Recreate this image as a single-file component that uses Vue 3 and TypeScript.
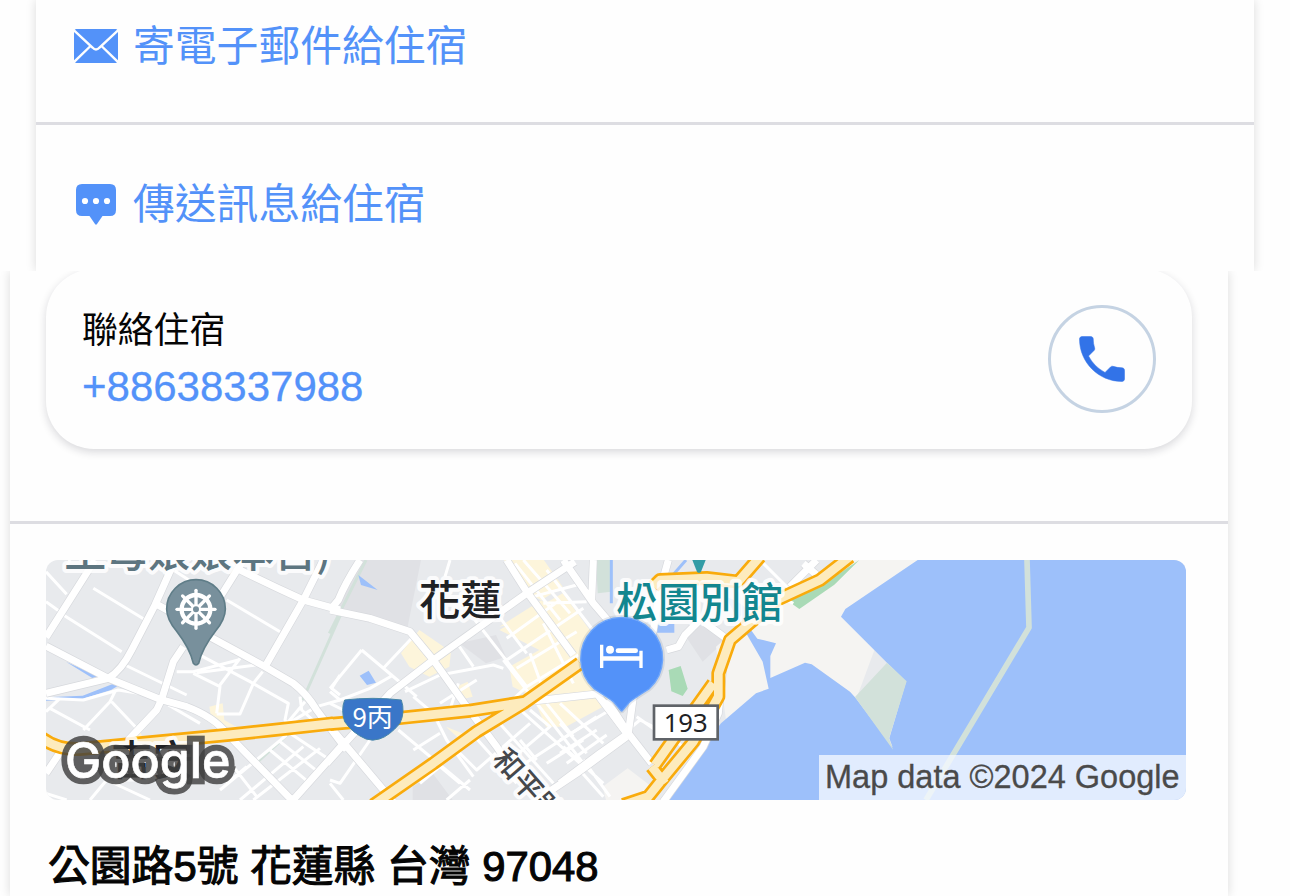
<script setup lang="ts">
/**
 * 住宿聯絡資訊
 */
interface Label {
  text: string
  x: number
  y: number
  size: number
  kind: string
  rotate?: number
}

interface Sector {
  x: number
  minor: string
  major: string
  highway: string
}

const phone = '+88638337988'
const address = '公園路5號 花蓮縣 台灣 97048'

// road network, west to east
const sectors: Sector[] = [
  {
    x: -18,
    minor:
      'M18 65L80 133M90 30L80 50M18 155L60 185M70 195L245 305M160 115L325 215M400 60L470 105M560 150L720 245M255 345L440 435M470 310L630 395L745 460L735 510L760 540M410 365H460L595 330M460 370L540 410L530 490M470 368L650 345M600 325L540 405M668 365L640 400L600 492H530M18 445L130 450L235 420L360 440M225 425L210 455L130 540M215 455L290 535M60 445L18 485M30 475L150 540M385 465L480 520M795 455L745 515M780 440L785 480L840 530M745 520L830 470L900 450M900 375L875 415L900 435M540 720L740 555M600 750L790 590M640 750L840 595M690 600L810 700M720 575L840 670M750 550L870 630M620 650L560 700M580 650L650 740M18 730L80 750M150 750L200 690L330 750',
    major:
      'M165 30L18 262M405 30L345 165L275 300Q245 360 205 385L18 430M345 160L400 190M18 288L205 385L360 448L440 470Q520 500 560 550L760 755M610 30L535 150M590 55Q690 105 790 150L900 180M850 30L790 150L675 350M500 255L675 350L760 400Q800 430 830 480L920 600M430 290L400 335L365 448L350 480L265 570M920 570L755 755M18 670L65 600',
    highway: 'M0 560Q50 600 120 597L300 580L560 555L700 540L880 520',
  },
  {
    x: 852,
    minor:
      'M360 30L345 80M95 300L220 405L260 440M95 300L0 415M160 355L245 265M0 425L30 450L120 415L190 375M225 425L330 375L490 345L520 355M385 285L430 350M435 210L590 410M500 190L590 310M555 40L690 210M580 30L720 190M650 60L800 255M590 145L740 105M640 160L770 155M530 265L690 150M530 330L760 175M560 355L740 245M590 410L745 315M640 220L730 400M600 310L640 420M520 330L760 640M590 410L520 475M330 460L440 390M385 400L350 510M250 440L310 490L350 570L430 680M205 540L420 720M250 600L330 550M270 700L330 650L390 700M350 750L420 690M380 600L440 660L600 520M430 555L560 700M500 510L670 700M560 470L750 640M600 480L660 530L530 640M570 650L800 500M650 640L760 570M700 590L820 700M760 630L840 740M650 460L730 560M0 690L30 700L120 570M0 460L40 480M0 700L40 750M570 570L620 630',
    major:
      'M90 30Q45 100 25 150L0 180M0 180L120 205L240 245L310 330L410 470L500 590L560 680M-10 640L180 430L310 330L590 130L735 35M530 30L590 125L730 315M700 30L790 160L850 230M790 30L785 150M590 455L820 430M0 530L190 755M620 750L740 670L890 560M800 430L890 550',
    highway: 'M0 522L200 505L420 482L590 455M130 765L310 640L440 545L580 460L750 340',
  },
  {
    x: 1542,
    minor:
      'M540 80L700 160M610 40L690 120M180 560L240 510L320 550L380 600M230 500L300 550M0 460L130 580M0 570L150 480M0 610L110 540M20 640L140 555M50 650L130 740M0 520L80 610M400 200L510 280',
    major:
      'M325 30L300 120L270 300M320 300L355 290L375 255L420 210M430 215L505 270M770 30L690 110M0 700L120 610L205 550L220 440M140 450L205 550L275 640M510 290L490 340L475 490L430 590L310 755M730 40L770 75',
    highway:
      'M190 765L265 740L305 690L400 575L475 440L475 370L510 270L650 150L780 90L870 20M275 650L315 700M285 645L460 400M280 110L300 90L440 84L535 95L600 20',
  },
]

const labels: Label[] = [
  { text: '王母娘娘本宮)', x: 55, y: 20, size: 126, kind: 'slate' },
  { text: '花蓮', x: 1119, y: 165, size: 124, kind: 'city' },
  { text: '松園別館', x: 1711, y: 174, size: 125, kind: 'teal' },
  { text: '吉安', x: 195, y: 646, size: 124, kind: 'town' },
  { text: '和平路', x: 1336, y: 599, size: 88, kind: 'street', rotate: 49 },
]

const spokes = [0, 45, 90, 135, 180, 225, 270, 315]
</script>

<template>
  <main class="page">
    <section class="clip clip-actions">
      <div class="sheet sheet-actions">
        <a class="action action-mail">
          <svg class="action-icon" viewBox="0 0 44 36">
            <rect x="0" y="1" width="44" height="34" rx="2.500" />
            <path class="fold" d="M-1 1.500L18.500 19.500Q22 23.500 25.500 19.500L45 1.500M-1 35L16 18.500M45 35L28 18.500" />
          </svg>
          <span>寄電子郵件給住宿</span>
        </a>
        <a class="action action-message">
          <svg class="action-icon" viewBox="0 0 44 44">
            <path d="M8 2H36Q42 2 42 8V28Q42 34 36 34H28.500L23 42Q22 43.500 21 42L15.500 34H8Q2 34 2 28V8Q2 2 8 2Z" />
            <g class="dots">
              <circle cx="11" cy="19" r="3.100" />
              <circle cx="22" cy="19" r="3.100" />
              <circle cx="33" cy="19" r="3.100" />
            </g>
          </svg>
          <span>傳送訊息給住宿</span>
        </a>
      </div>
    </section>

    <section class="clip clip-details">
      <div class="sheet sheet-details">
        <div class="contact">
          <div class="contact-card">
            <div class="contact-info">
              <div class="contact-title">聯絡住宿</div>
              <a class="contact-phone">{{ phone }}</a>
            </div>
            <button class="call" aria-label="聯絡住宿">
              <svg viewBox="0 0 24 24">
                <path d="M6.620 10.790c1.440 2.830 3.760 5.140 6.590 6.590l2.200-2.200c.27-.27.67-.36 1.020-.24 1.120.37 2.330.57 3.570.57.55 0 1 .45 1 1V20c0 .55-.45 1-1 1C10.610 21 3 13.390 3 4c0-.55.45-1 1-1h3.500c.55 0 1 .45 1 1 0 1.250.2 2.450.57 3.570.11.35.03.74-.25 1.020l-2.200 2.200z" />
              </svg>
            </button>
          </div>
        </div>

        <div class="location">
          <div class="map">
            <svg class="map-canvas" viewBox="0 0 3420 720">
              <!-- land use -->
              <path class="urban" d="M935 0H1125L1085 200L1010 190L865 140ZM1240 250L1350 225L1380 290L1320 310ZM1920 230L1970 190L2050 230L1970 305ZM1100 680L1160 640L1220 720H1100Z" />
              <path class="commercial" d="M1065 280L1120 210L1215 275L1210 320L1150 350L1090 320ZM1360 200L1550 80L1490 -5H1370L1450 100L1550 160ZM1360 210L1550 100L1690 290L1690 430L1560 500L1500 500L1460 410L1400 380L1390 320L1480 270L1420 240ZM1230 380L1265 365L1280 410L1240 420ZM1200 500L1300 540L1260 555ZM490 440L530 430L535 480L570 500H500ZM250 520L280 500L290 540H240Z" />
              <path class="sage" d="M1650 0H1695V95L1655 100Z" />
              <path class="shore" d="M1670 680L1745 625L1830 690L1800 720H1680ZM2010 260L2160 130L2420 0H2640L2500 230L2400 500L2040 480Z" />
              <path class="park-line" d="M890 150L770 420M740 510L630 610M960 0L850 220" />
              <!-- water -->
              <path class="water" d="M2615 0H3420V720H1870L1965 570L2025 490L2130 400L2168 386L2150 305L2098 215L2115 210L2134 236L2190 250L2173 288V354L2277 308L2297 313L2412 395L2427 412L2540 562L2530 535L2580 365L2385 170L2398 147Z" />
              <path class="water" d="M937 45L995 90L945 75ZM941 347L968 332L990 368L963 375ZM0 412L110 407L200 372L225 372L195 390L110 416L0 422ZM60 305L155 348L140 355ZM1810 190L1885 192V218H1820ZM2040 110Q2110 135 2120 180L2080 190Z" />
              <path class="stream" d="M1696 0V130M1920 0L1850 80" />
              <path class="green" d="M2225 122L2350 60L2440 0L2365 74L2260 147ZM1868 330L1904 318L1925 386L1910 408L1876 394Z" />
              <path class="sage" d="M2523 308L2582 364L2529 535L2541 569L2427 411Z" />
              <path class="breakwater" d="M2943 0L2949 203L2640 720" />

              <!-- roads -->
              <g v-for="s in sectors" :key="'minor' + s.x" :transform="`translate(${s.x} -30)`">
                <path class="minor" :d="s.minor" />
              </g>
              <g v-for="s in sectors" :key="'edge' + s.x" :transform="`translate(${s.x} -30)`">
                <path class="major-edge" :d="s.major" />
              </g>
              <g v-for="s in sectors" :key="'major' + s.x" :transform="`translate(${s.x} -30)`">
                <path class="major" :d="s.major" />
              </g>
              <g v-for="s in sectors" :key="'hwedge' + s.x" :transform="`translate(${s.x} -30)`">
                <path class="highway-edge" :d="s.highway" />
              </g>
              <g v-for="s in sectors" :key="'hw' + s.x" :transform="`translate(${s.x} -30)`">
                <path class="highway" :d="s.highway" />
              </g>

              <path class="teal-pin" d="M1939 0H1979L1965 35Q1959 42 1953 35Z" />
              <text
                v-for="l in labels"
                :key="l.text"
                class="label"
                :class="l.kind"
                :x="l.x"
                :y="l.y"
                :font-size="l.size"
                :transform="l.rotate ? `rotate(${l.rotate} ${l.x} ${l.y})` : undefined"
              >{{ l.text }}</text>

              <!-- temple pin -->
              <g transform="translate(450 148)">
                <path class="temple-pin" d="M-8 162Q-18 118 -58 66Q-88 30 -88 -1A88 88 0 0 1 88 -1Q88 30 58 66Q18 118 8 162Q0 172 -8 162Z" />
                <circle class="wheel" r="43" />
                <path v-for="a in spokes" :key="a" class="wheel-spoke" d="M0 -12V-57" :transform="`rotate(${a})`" />
                <circle class="wheel-hub" r="12" />
              </g>

              <!-- route shields -->
              <path class="shield" d="M896 420Q980 410 1066 420Q1078 455 1062 490Q1030 528 1000 537Q980 544 960 537Q920 520 896 485Q884 450 896 420Z" />
              <text class="shield-text" x="980" y="502" font-size="78">9丙</text>
              <rect class="plate" x="1824" y="437" width="191" height="101" />
              <text class="plate-text" x="1919" y="515" font-size="77">193</text>

              <!-- property pin -->
              <g transform="translate(1727 293)">
                <path class="hotel-glow" d="M-3 158L-25 132Q-38 122 -82 94A123 123 0 1 1 82 94Q38 122 25 132L3 158Q0 162 -3 158Z" />
                <path class="hotel-pin" d="M-3 158L-25 132Q-38 122 -82 94A123 123 0 1 1 82 94Q38 122 25 132L3 158Q0 162 -3 158Z" />
                <g class="bed">
                  <path d="M-65 -39H-55V-4H53V-21H63V31H53V9H-55V31H-65Z" />
                  <circle cx="-35" cy="-24" r="12" />
                  <rect x="-18" y="-28" width="67" height="14" rx="7" />
                </g>
              </g>

              <text class="logo logo-edge" x="57" y="653" textLength="496" lengthAdjust="spacingAndGlyphs">Google</text>
              <text class="logo" x="57" y="653" textLength="496" lengthAdjust="spacingAndGlyphs">Google</text>
            </svg>
            <div class="attribution">Map data ©2024 Google</div>
          </div>
          <div class="address">{{ address }}</div>
        </div>
      </div>
    </section>
  </main>
</template>

<style>
body {
  background: #fefefe;
  overflow: hidden;
}
</style>

<style scoped>
.page {
  width: 1290px;
  height: 896px;
  overflow: hidden;
  font-family: "Liberation Sans", "Noto Sans CJK TC", sans-serif;
  color: #050505;
}

.clip {
  overflow: hidden;
}

.clip-actions {
  height: 271px;
  padding: 0 36px;
}

.clip-details {
  height: 625px;
  padding: 0 62px 0 10px;
}

.sheet {
  width: 1218px;
  height: 100%;
  background: #fefefe;
  box-shadow: 0 0 10px rgba(0, 0, 0, 0.14);
}

.action {
  display: flex;
  align-items: center;
  gap: 15px;
  box-sizing: border-box;
  padding-left: 38px;
  color: #5392f9;
  font-family: "Noto Sans CJK TC", sans-serif;
  font-size: 41.800px;
  font-weight: 400;
  line-height: 60px;
}

.action span {
  padding-bottom: 6px;
}

.action-mail {
  height: 125px;
  padding-bottom: 30px;
  border-bottom: 3px solid #dddde2;
}

.action-message {
  height: 146px;
  padding-top: 12px;
}

.action-icon {
  width: 44px;
  fill: #5392f9;
}

.fold {
  fill: none;
  stroke: #fefefe;
  stroke-width: 2.400;
}

.dots {
  fill: #fff;
}

.contact {
  display: flow-root;
  box-sizing: border-box;
  height: 253px;
  padding: 0 36px;
  border-bottom: 3px solid #dddde2;
}

.contact-card {
  display: flex;
  align-items: center;
  justify-content: space-between;
  box-sizing: border-box;
  height: 180px;
  margin-top: -2px;
  padding: 0 36px;
  border-radius: 48px;
  box-shadow: 0 3px 9px rgba(20, 20, 40, 0.16);
}

.contact-info {
  padding-bottom: 2px;
}

.contact-title {
  font-family: "Noto Sans CJK TC", sans-serif;
  font-size: 35.800px;
  line-height: 54px;
  padding-bottom: 4px;
}

.contact-phone {
  display: block;
  color: #5392f9;
  font-size: 42px;
  line-height: 58px;
  -webkit-text-stroke: 0.3px #5392f9;
}

.call {
  display: flex;
  align-items: center;
  justify-content: center;
  box-sizing: border-box;
  width: 108px;
  height: 108px;
  padding: 0;
  border: 3px solid #c5d3e3;
  border-radius: 50%;
  background: none;
}

.call svg {
  width: 60px;
  height: 60px;
  fill: #3273e8;
  stroke: #3273e8;
  stroke-width: 0.2;
}

.location {
  padding: 36px 36px 0;
}

.map {
  position: relative;
  width: 1140px;
  height: 240px;
  border-radius: 12px;
  overflow: hidden;
  background: #e8eaed;
}

.map-canvas {
  display: block;
  width: 100%;
  height: 100%;
}

.map-canvas path {
  stroke-linejoin: round;
}

.urban {
  fill: #e0e1e5;
}

.commercial {
  fill: #fdf5db;
}

.shore {
  fill: #f5f4f2;
}

.water {
  fill: #9dc0fa;
}

.green {
  fill: #a9dab6;
}

.sage {
  fill: #d2e1da;
}

.teal-pin {
  fill: #329ca6;
}

.park-line,
.stream,
.breakwater,
.minor,
.major,
.major-edge,
.highway,
.highway-edge {
  fill: none;
}

.park-line {
  stroke: #d2e1da;
  stroke-width: 9;
}

.stream {
  stroke: #9dc0fa;
  stroke-width: 9;
}

.breakwater {
  stroke: #d2e1da;
  stroke-width: 17;
}

.minor {
  stroke: #fff;
  stroke-width: 9;
}

.major {
  stroke: #fff;
  stroke-width: 21;
}

.major-edge {
  stroke: #d7d9dd;
  stroke-width: 25;
}

.highway {
  stroke: #fdebbd;
  stroke-width: 26;
}

.highway-edge {
  stroke: #f9ab0c;
  stroke-width: 42;
}

.label {
  font-family: "Noto Sans CJK TC", sans-serif;
  font-weight: 500;
  paint-order: stroke;
  stroke: #fff;
  stroke-opacity: 0.85;
  stroke-width: 24;
  stroke-linejoin: round;
}

.slate {
  fill: #5d7580;
}

.city,
.town {
  fill: #202124;
}

.teal {
  fill: #12868f;
}

.street {
  fill: #45484c;
}

.temple-pin {
  fill: #78909c;
  stroke: #5f7d88;
  stroke-width: 5;
}

.wheel {
  fill: none;
  stroke: #fff;
  stroke-width: 13;
}

.wheel-spoke {
  stroke: #fff;
  stroke-width: 10;
  stroke-linecap: round;
}

.wheel-hub {
  fill: #78909c;
  stroke: #fff;
  stroke-width: 6;
}

.shield {
  fill: #3a76c8;
  stroke: #4786a8;
  stroke-width: 3;
}

.shield-text {
  fill: #fff;
  font-family: "Noto Sans CJK TC", sans-serif;
  text-anchor: middle;
}

.plate {
  fill: #fff;
  stroke: #5f6368;
  stroke-width: 8;
}

.plate-text {
  fill: #202124;
  font-family: "Noto Sans", sans-serif;
  text-anchor: middle;
}

.hotel-glow {
  fill: none;
  stroke: #50648a;
  stroke-opacity: 0.14;
  stroke-width: 14;
}

.hotel-pin {
  fill: #5392f9;
  stroke: #6ea6fb;
  stroke-width: 4;
}

.bed {
  fill: #fff;
}

.logo {
  fill: #fff;
  stroke: #fff;
  stroke-width: 2;
  font-family: Inter, sans-serif;
  font-size: 146px;
  font-weight: 500;
}

.logo-edge {
  fill: none;
  stroke: #404040;
  stroke-opacity: 0.82;
  stroke-width: 38;
}

.attribution {
  position: absolute;
  right: 0;
  bottom: 0;
  box-sizing: border-box;
  width: 367px;
  height: 45px;
  padding-left: 6px;
  background: rgba(245, 248, 255, 0.78);
  color: #4a4a4a;
  font-size: 32.500px;
  line-height: 45px;
  white-space: nowrap;
  -webkit-text-stroke: 0.3px #4a4a4a;
}

.address {
  margin-top: 37px;
  padding-left: 2px;
  font-size: 41.800px;
  line-height: 60px;
  font-weight: 400;
  white-space: nowrap;
  -webkit-text-stroke: 1.100px #050505;
}
</style>
